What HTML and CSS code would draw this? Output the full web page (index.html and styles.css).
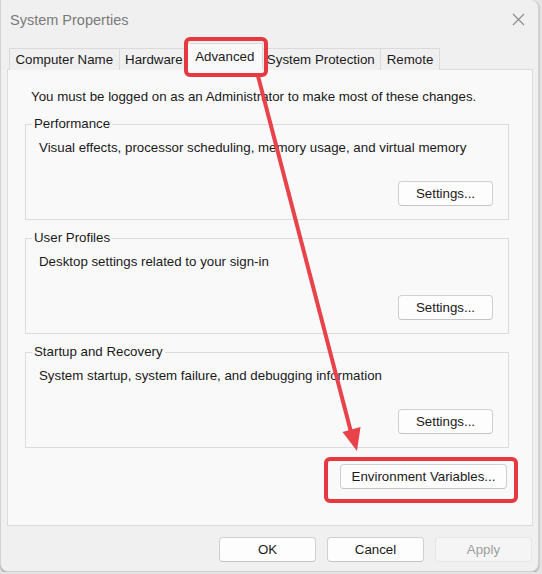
FILE: index.html
```html
<!DOCTYPE html>
<html lang="en">
<head>
    <meta charset="UTF-8">
    <title>System Properties</title>
    <link rel="stylesheet" href="styles.css">
</head>
<body>
    <div class="sp-window">
        <div class="sp-titlebar">
            <span class="sp-title">System Properties</span>
            <svg class="sp-close" width="13" height="13" viewBox="0 0 13 13">
                <path d="M1 1 L12 12 M12 1 L1 12" stroke="#8a8a8a" stroke-width="1.1" fill="none"/>
            </svg>
        </div>

        <div class="sp-tabs">
            <div class="sp-tab">Computer Name</div>
            <div class="sp-tab">Hardware</div>
            <div class="sp-tab active">Advanced</div>
            <div class="sp-tab">System Protection</div>
            <div class="sp-tab">Remote</div>
        </div>

        <div class="sp-panel">
            <p class="sp-intro">You must be logged on as an Administrator to make most of these changes.</p>

            <fieldset class="sp-group">
                <legend>Performance</legend>
                <p class="sp-desc">Visual effects, processor scheduling, memory usage, and virtual memory</p>
                <div class="sp-row"><button class="sp-btn">Settings...</button></div>
            </fieldset>

            <fieldset class="sp-group">
                <legend>User Profiles</legend>
                <p class="sp-desc">Desktop settings related to your sign-in</p>
                <div class="sp-row"><button class="sp-btn">Settings...</button></div>
            </fieldset>

            <fieldset class="sp-group">
                <legend>Startup and Recovery</legend>
                <p class="sp-desc">System startup, system failure, and debugging information</p>
                <div class="sp-row"><button class="sp-btn">Settings...</button></div>
            </fieldset>

            <div class="sp-row sp-env-row">
                <button class="sp-btn sp-env">Environment Variables...</button>
            </div>
        </div>

        <div class="sp-footer">
            <button class="sp-btn sp-dlg">OK</button>
            <button class="sp-btn sp-dlg">Cancel</button>
            <button class="sp-btn sp-dlg disabled">Apply</button>
        </div>

        <!-- annotations drawn over the dialog -->
        <div class="sp-mark sp-mark-tab"></div>
        <div class="sp-mark sp-mark-env"></div>
        <svg class="sp-arrow" width="539" height="571" viewBox="0 0 539 571">
            <line x1="258" y1="76" x2="351" y2="432" stroke="#e8424a" stroke-width="4"/>
            <polygon points="357,451 342.5,432 360.5,427" fill="#e8424a"/>
        </svg>
    </div>
</body>
</html>
```

FILE: styles.css
```css
* {
    box-sizing: border-box;
}

body {
    margin: 0;
    background: #e4e4e4;
    font-family: "Liberation Sans", Arial, sans-serif;
    font-size: 13.3px;
    color: #1a1a1a;
}

.sp-window {
    position: relative;
    width: 539px;
    height: 572px;
    background: #f0f0f0;
    border: 1px solid #d2d2d2;
    border-top: none;
    border-radius: 0 8px 8px 8px;
    box-shadow: 0 1px 2px rgba(0,0,0,0.35);
}

.sp-titlebar {
    height: 40px;
    display: flex;
    align-items: center;
    justify-content: space-between;
    padding: 0 13px 0 9px;
}

.sp-title {
    font-size: 14.5px;
    color: #7a7a7a;
}

.sp-close {
    margin-top: -2px;
}

/* Tabs */
.sp-tabs {
    display: flex;
    align-items: flex-end;
    height: 27px;
    margin: 3px 0 -1px 8px;
    position: relative;
    z-index: 1;
}

.sp-tab {
    height: 22px;
    line-height: 21px;
    padding: 0 5.5px;
    border: 1px solid #dadada;
    border-bottom: none;
    margin-right: -1px;
    background: #f0f0f0;
    white-space: nowrap;
}

.sp-tab.active {
    height: 27px;
    line-height: 26px;
    padding: 0 8px;
    margin: 0 -3px 0 -2px;
    background: #f9f9f9;
    position: relative;
    z-index: 2;
}

/* Panel */
.sp-panel {
    height: 457px;
    margin-left: 6px;
    width: 526px;
    background: #f9f9f9;
    border: 1px solid #dcdcdc;
    padding: 19px 23px 0 17px;
}

.sp-intro {
    margin: 0 0 11px 6px;
    line-height: 16px;
}

.sp-group {
    margin: 0 0 10px 0;
    border: 1px solid #dcdcdc;
    padding: 8px 15px 13px 13px;
    min-width: 0;
}

.sp-group legend {
    margin-left: -7px;
    padding: 0 2px;
    line-height: 16px;
}

.sp-desc {
    margin: 0;
    line-height: 16px;
}

.sp-row {
    display: flex;
    justify-content: flex-end;
    margin-top: 25px;
}

.sp-env-row {
    margin-top: 16px;
    padding-right: 2px;
}

.sp-btn {
    height: 25px;
    width: 95px;
    font-family: inherit;
    font-size: 13.3px;
    color: #1a1a1a;
    background: #fdfdfd;
    border: 1px solid #d0d0d0;
    border-bottom-color: #c4c4c4;
    border-radius: 4px;
    padding: 0;
}

.sp-env {
    width: 167px;
}

/* Dialog buttons */
.sp-footer {
    display: flex;
    justify-content: flex-end;
    gap: 11px;
    padding: 11px 6px 0 0;
}

.sp-dlg {
    width: 97px;
    height: 25px;
}

.sp-dlg.disabled {
    background: #f5f5f5;
    border-color: #e6e6e6;
    color: #a0a0a0;
}

/* Red annotations */
.sp-mark {
    position: absolute;
    border: 4px solid #e5393f;
    border-radius: 6px;
    z-index: 3;
}

.sp-mark-tab {
    left: 183px;
    top: 37px;
    width: 84px;
    height: 40px;
}

.sp-mark-env {
    left: 323px;
    top: 457px;
    width: 194px;
    height: 46px;
}

.sp-arrow {
    position: absolute;
    left: -1px;
    top: 0;
    z-index: 4;
    pointer-events: none;
}
```
